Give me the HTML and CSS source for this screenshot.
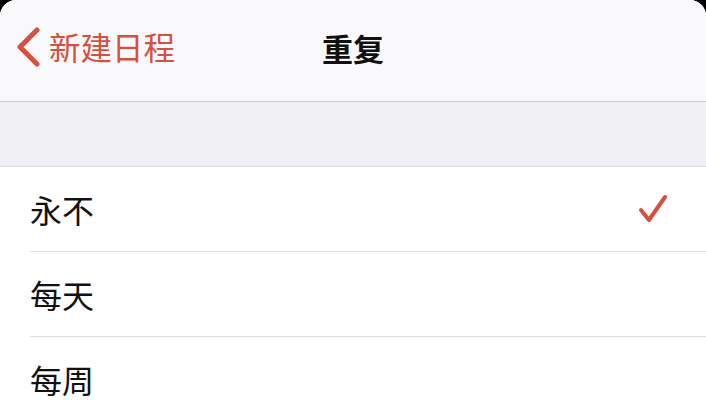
FILE: index.html
```html
<!DOCTYPE html>
<html lang="zh-CN">
<head>
<meta charset="utf-8">
<title>重复</title>
<link rel="stylesheet" href="styles.css">
</head>
<body>
<div class="screen">
  <header class="nav">
    <div class="back">
      <svg class="chev" width="26" height="40" viewBox="0 0 26 40"><path d="M21 3 L4 20 L21 37" fill="none" stroke="currentColor" stroke-width="5" stroke-linecap="round" stroke-linejoin="round"/></svg>
      <span>新建日程</span>
    </div>
    <h1 class="title">重复</h1>
    <div></div>
  </header>
  <div class="spacer"></div>
  <ul class="list">
    <li class="row"><span>永不</span><svg class="check" width="32" height="30" viewBox="0 0 32 30"><path d="M3 16 L11 26 L27 3" fill="none" stroke="currentColor" stroke-width="4" stroke-linecap="round" stroke-linejoin="round"/></svg></li>
    <li class="row"><span>每天</span></li>
    <li class="row"><span>每周</span></li>
  </ul>
</div>
</body>
</html>
```
FILE: styles.css
```css
html, body {
  margin: 0;
  padding: 0;
  background: #000;
}
body {
  width: 706px;
  height: 400px;
  overflow: hidden;
  font-family: "Noto Sans CJK SC", "Noto Sans", sans-serif;
}
.screen {
  background: #fff;
  border-radius: 16px 16px 0 0;
  overflow: hidden;
  height: 400px;
}
.nav {
  height: 102px;
  box-sizing: border-box;
  background: #f9f9fb;
  border-bottom: 1px solid #cdcdd1;
  display: grid;
  grid-template-columns: 1fr auto 1fr;
  align-items: center;
  padding-bottom: 7px;
}
.back {
  display: flex;
  align-items: center;
  color: #d6503f;
  font-size: 31.5px;
  line-height: 1;
  padding-left: 16px;
  gap: 7px;
}
.chev {
  display: block;
}
.title {
  margin: 0;
  font-size: 31px;
  font-weight: 700;
  color: #111;
  line-height: 1;
}
.spacer {
  height: 65px;
  box-sizing: border-box;
  background: #f0f0f4;
  border-bottom: 1px solid #dcdce0;
}
.list {
  list-style: none;
  margin: 0;
  padding: 0 0 0 30px;
  background: #fff;
}
.row {
  height: 85px;
  box-sizing: border-box;
  border-bottom: 1px solid #dedee0;
  display: flex;
  align-items: center;
  justify-content: space-between;
  padding-right: 36px;
  font-size: 32px;
  color: #111;
  line-height: 1;
}
.check {
  color: #d6503f;
  display: block;
}
```
